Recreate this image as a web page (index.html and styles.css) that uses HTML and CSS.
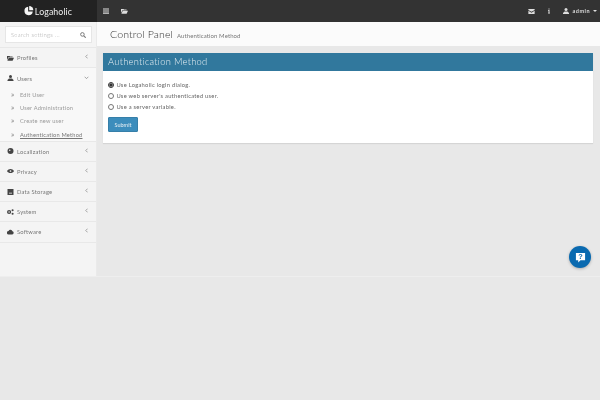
FILE: index.html
```html
<!DOCTYPE html>
<html lang="en">
<head>
<meta charset="utf-8">
<title>Logaholic Control Panel</title>
<link rel="stylesheet" href="styles.css">
</head>
<body>
<div class="wrapper">
  <header class="topbar">
    <div class="logo">
      <svg class="logo-icon" viewBox="0 0 12 12" width="10" height="10"><path d="M5 1a5 5 0 1 0 5.500 5.500H5z" fill="#f5f5f5"/><path d="M6.200 0v5h5a5 5 0 0 0-5-5z" fill="#f5f5f5"/></svg>
      <span>Logaholic</span>
    </div>
    <nav class="topnav">
      <div class="topnav-left">
        <svg class="ti" viewBox="0 0 8 8" width="6" height="6"><path d="M0 .5h8v1.500H0zM0 3.200h8v1.500H0zM0 6h8v1.500H0z" fill="#ddd"/></svg>
        <svg class="ti" viewBox="0 0 10 8" width="7" height="6"><path d="M0 1h3.500l1 1H8v1H2L0 7zM2.500 3.700H10L8 8H.5z" fill="#ddd"/></svg>
      </div>
      <div class="topnav-right">
        <svg class="ti" viewBox="0 0 10 8" width="7" height="5"><path d="M0 0h10v1.500L5 4.500 0 1.500zM0 2.800l5 3 5-3V8H0z" fill="#ddd"/></svg>
        <svg class="ti" viewBox="0 0 4 10" width="2" height="6"><path d="M1 0h2v2H1zM0 3h3v5.500h1V10H0V8.500h1V4.500H0z" fill="#ddd"/></svg>
        <span class="user">
          <svg class="ti" viewBox="0 0 8 8" width="6" height="6"><circle cx="4" cy="2" r="2" fill="#ddd"/><path d="M0 8V6.500L2 4.500h4l2 2V8z" fill="#ddd"/></svg>
          <span class="user-name">admin</span>
          <i class="caret"></i>
        </span>
      </div>
    </nav>
  </header>
  <div class="body-row">
    <aside class="sidebar">
      <div class="search-wrap">
        <div class="search">
          <span>Search settings ...</span>
          <svg viewBox="0 0 10 10" width="6" height="6"><circle cx="4" cy="4" r="3" fill="none" stroke="#777" stroke-width="1.600"/><path d="M6.300 6.300 9.500 9.500" stroke="#777" stroke-width="1.800"/></svg>
        </div>
      </div>
      <ul class="menu">
        <li class="item"><svg class="mi" viewBox="0 0 10 8"><path d="M0 1h3.500l1 1H8v1H2L0 7zM2.500 3.700H10L8 8H.5z"/></svg><span>Profiles</span><svg class="chev" viewBox="0 0 4 6"><path d="M3.500.5 1 3l2.500 2.500" /></svg></li>
        <li class="item open">
          <div class="item-head"><svg class="mi" viewBox="0 0 8 8"><circle cx="4" cy="2" r="2"/><path d="M0 8V6.500L2 4.500h4l2 2V8z"/></svg><span>Users</span><svg class="chev down" viewBox="0 0 6 4"><path d="M.5 1 3 3.500 5.500 1"/></svg></div>
          <ul class="sub">
            <li>Edit User</li>
            <li>User Administration</li>
            <li>Create new user</li>
            <li class="active">Authentication Method</li>
          </ul>
        </li>
        <li class="item"><svg class="mi" viewBox="0 0 8 8"><circle cx="4" cy="4" r="4"/><circle cx="3" cy="3" r="1" fill="#f4f4f4"/></svg><span>Localization</span><svg class="chev" viewBox="0 0 4 6"><path d="M3.500.5 1 3l2.500 2.500"/></svg></li>
        <li class="item"><svg class="mi" viewBox="0 0 10 6"><path d="M0 3c2-4 8-4 10 0-2 4-8 4-10 0z"/><circle cx="5" cy="3" r="1.200" fill="#f4f4f4"/></svg><span>Privacy</span><svg class="chev" viewBox="0 0 4 6"><path d="M3.500.5 1 3l2.500 2.500"/></svg></li>
        <li class="item"><svg class="mi" viewBox="0 0 8 8"><path d="M0 0h8v8H0z"/><path d="M2 5h4v1H2z" fill="#f4f4f4"/></svg><span>Data Storage</span><svg class="chev" viewBox="0 0 4 6"><path d="M3.500.5 1 3l2.500 2.500"/></svg></li>
        <li class="item"><svg class="mi" viewBox="0 0 10 8"><circle cx="3" cy="4" r="3"/><circle cx="3" cy="4" r="1" fill="#f4f4f4"/><circle cx="8" cy="1.500" r="1.500"/><circle cx="8" cy="6.500" r="1.500"/></svg><span>System</span><svg class="chev" viewBox="0 0 4 6"><path d="M3.500.5 1 3l2.500 2.500"/></svg></li>
        <li class="item"><svg class="mi" viewBox="0 0 10 7"><path d="M2.500 7a2.500 2.500 0 0 1-.3-5A3 3 0 0 1 7.800 2.500 2.300 2.300 0 0 1 7.500 7z"/></svg><span>Software</span><svg class="chev" viewBox="0 0 4 6"><path d="M3.500.5 1 3l2.500 2.500"/></svg></li>
      </ul>
    </aside>
    <main class="content">
      <div class="page-head">
        <h1>Control Panel</h1>
        <small>Authentication Method</small>
      </div>
      <section class="box">
        <h2>Authentication Method</h2>
        <form class="box-body">
          <label class="radio"><input type="radio" name="auth" checked>Use Logaholic login dialog.</label>
          <label class="radio"><input type="radio" name="auth">Use web server's authenticated user.</label>
          <label class="radio"><input type="radio" name="auth">Use a server variable.</label>
          <button type="button" class="btn">Submit</button>
        </form>
      </section>
    </main>
  </div>
  <button type="button" class="help" aria-label="Help">
    <svg viewBox="0 0 12 12" width="11" height="11"><path d="M1 1h10v8H6l-2.500 2.500V9H1z" fill="#fff"/><text x="6" y="7.800" text-anchor="middle" class="q">?</text></svg>
  </button>
</div>
</body>
</html>
```
FILE: styles.css
```css
* { box-sizing: border-box; }
html, body { margin: 0; height: 100%; }
body {
  background: #e8e8e8;
  font-family: Lato, "Liberation Sans", sans-serif;
  font-weight: 300;
  color: #444;
  overflow: hidden;
}
ul { list-style: none; margin: 0; padding: 0; }
.wrapper { position: relative; height: 400px; filter: blur(.3px); background: #e8e8e8; }
.topbar { display: flex; height: 22px; background: #333; }
.logo {
  width: 97px;
  background: #222;
  color: #eee;
  display: flex;
  align-items: center;
  justify-content: center;
  gap: 1px;
  font-size: 8.800px;
  font-weight: 400;
  letter-spacing: .1px;
  padding-right: 1px;
}
.topnav { flex: 1; display: flex; justify-content: space-between; align-items: center; padding: 0 3px 0 6px; }
.topnav-left, .topnav-right { display: flex; align-items: center; }
.topnav-left { gap: 12px; }
.topnav-right { gap: 13px; }
.ti { display: block; }
.user { display: flex; align-items: center; gap: 3px; color: #ddd; font-size: 5.500px; font-weight: 700; letter-spacing: .5px; }
.caret { width: 0; height: 0; border: 2px solid transparent; border-top-color: #ddd; border-bottom: 0; margin-left: 0; }
.body-row { display: flex; height: 255px; border-bottom: 1px solid #eee; }
.sidebar { width: 97px; background: #f4f4f4; border-right: 1px solid #eaeaea; flex: none; }
.search-wrap { padding: 4px 4px 0 5px; height: 26px; border-bottom: 1px solid #e8e8e8; }
.search {
  height: 17px;
  background: #fff;
  border: 1px solid #e6e6e6;
  padding: 0 5px;
  display: flex;
  justify-content: space-between;
  align-items: center;
  font-size: 5.800px;
  color: #aaa;
  letter-spacing: .3px;
}
.item, .item-head {
  display: flex;
  align-items: center;
  height: 20.200px;
  padding: 0 7px;
  font-size: 5.800px;
  color: #777;
  font-weight: 400;
  letter-spacing: .2px;
}
.item { border-bottom: 1px solid #e8e8e8; }
.item.open { display: block; height: auto; padding: 0; background: #f8f8f8; }
.item span { flex: 1; }
.mi { width: 7px; height: 6px; margin-right: 3px; fill: #444; flex: none; }
.chev { width: 3px; height: 5px; fill: none; stroke: #888; stroke-width: 1; flex: none; margin-right: 1px; margin-top: -2px; }
.chev.down { width: 5px; height: 3px; margin-right: 0; }
.sub li {
  height: 13.050px;
  line-height: 13px;
  padding-left: 20px;
  font-size: 5.700px;
  color: #999;
  font-weight: 400;
  position: relative;
  letter-spacing: .2px;
}
.sub li::before { content: "»"; position: absolute; left: 11px; font-size: 7.500px; color: #777; }
.sub li.active { text-decoration: underline; color: #777; }
.content { flex: 1; min-width: 0; }
.page-head {
  height: 24px;
  background: #fbfbfb;
  display: flex;
  align-items: center;
  padding: 0 13px;
  gap: 4px;
}
.page-head h1 { margin: 0; font-size: 10.600px; font-weight: 300; color: #333; letter-spacing: .1px; }
.page-head small { font-size: 6px; color: #777; font-weight: 400; margin-top: 3px; letter-spacing: .1px; }
.box { margin: 7px 7px 0 6px; background: #fff; height: 90px; box-shadow: 0 1px 1px rgba(0,0,0,.08); }
.box h2 {
  margin: 0;
  height: 18px;
  line-height: 18px;
  background: #31789d;
  color: #e8f0f4;
  font-size: 9.300px;
  font-weight: 300;
  padding-left: 5px;
  letter-spacing: .3px;
}
.box-body { padding: 8px 5px 0; display: flex; flex-direction: column; align-items: flex-start; }
.radio { display: flex; align-items: center; height: 11px; font-size: 5.800px; font-weight: 400; color: #666; letter-spacing: .25px; }
.radio input { width: 6px; height: 6px; margin: 0 2.500px 0 0; accent-color: #333; }
.btn {
  margin-top: 5px;
  width: 30px;
  height: 15px;
  background: #3c8dbc;
  border: 1px solid #367fa9;
  border-radius: 1px;
  color: #e8f0f4;
  font: 400 5.500px Lato, sans-serif;
  padding: 0;
}
.help {
  position: absolute;
  left: 569px;
  top: 246px;
  width: 22px;
  height: 22px;
  border-radius: 50%;
  border: 0;
  padding: 0;
  background: #0a6ab0;
  display: flex;
  align-items: center;
  justify-content: center;
  box-shadow: 0 1px 3px rgba(0,0,0,.25);
}
.q { font: 700 8px "Liberation Sans", sans-serif; fill: #0a6ab0; }
```
